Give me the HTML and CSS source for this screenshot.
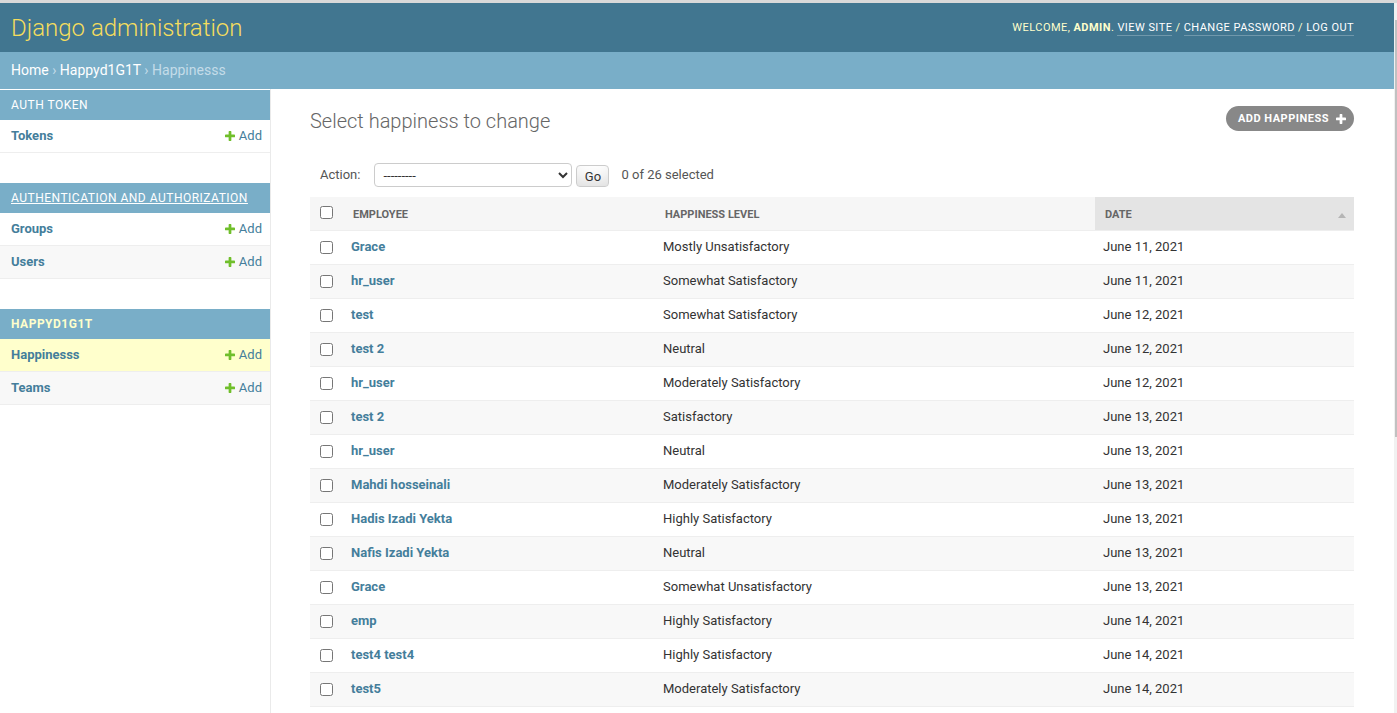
FILE: index.html
```html
<!DOCTYPE html>
<html lang="en">
<head>
<meta charset="utf-8">
<title>Select happiness to change | Django site admin</title>
<link rel="stylesheet" href="styles.css">
</head>
<body>
<div class="window">
  <div class="page">
    <div class="header">
      <h1 class="site-name">Django administration</h1>
      <div class="user-tools">
        Welcome, <strong>admin</strong>. <a href="#">View site</a> / <a href="#">Change password</a> / <a href="#">Log out</a>
      </div>
    </div>
    <div class="breadcrumbs">
      <a href="#">Home</a> › <a href="#">Happyd1G1T</a> › Happinesss
    </div>
    <div class="main">
      <nav class="sidebar">
        <div class="module">
          <div class="module-caption">Auth Token</div>
          <div class="model-row">
            <a class="model-name" href="#">Tokens</a>
            <a class="add-link" href="#"><svg class="plus" viewBox="192 192 1408 1408"><path d="M1600 796v192q0 40-28 68t-68 28h-416v416q0 40-28 68t-68 28h-192q-40 0-68-28t-28-68v-416h-416q-40 0-68-28t-28-68v-192q0-40 28-68t68-28h416v-416q0-40 28-68t68-28h192q40 0 68 28t28 68v416h416q40 0 68 28t28 68z"/></svg>Add</a>
          </div>
        </div>
        <div class="module">
          <div class="module-caption caption-hover">Authentication and Authorization</div>
          <div class="model-row">
            <a class="model-name" href="#">Groups</a>
            <a class="add-link" href="#"><svg class="plus" viewBox="192 192 1408 1408"><path d="M1600 796v192q0 40-28 68t-68 28h-416v416q0 40-28 68t-68 28h-192q-40 0-68-28t-28-68v-416h-416q-40 0-68-28t-28-68v-192q0-40 28-68t68-28h416v-416q0-40 28-68t68-28h192q40 0 68 28t28 68v416h416q40 0 68 28t28 68z"/></svg>Add</a>
          </div>
          <div class="model-row alt">
            <a class="model-name" href="#">Users</a>
            <a class="add-link" href="#"><svg class="plus" viewBox="192 192 1408 1408"><path d="M1600 796v192q0 40-28 68t-68 28h-416v416q0 40-28 68t-68 28h-192q-40 0-68-28t-28-68v-416h-416q-40 0-68-28t-28-68v-192q0-40 28-68t68-28h416v-416q0-40 28-68t68-28h192q40 0 68 28t28 68v416h416q40 0 68 28t28 68z"/></svg>Add</a>
          </div>
        </div>
        <div class="module">
          <div class="module-caption current-app">Happyd1G1T</div>
          <div class="model-row selected">
            <a class="model-name" href="#">Happinesss</a>
            <a class="add-link" href="#"><svg class="plus" viewBox="192 192 1408 1408"><path d="M1600 796v192q0 40-28 68t-68 28h-416v416q0 40-28 68t-68 28h-192q-40 0-68-28t-28-68v-416h-416q-40 0-68-28t-28-68v-192q0-40 28-68t68-28h416v-416q0-40 28-68t68-28h192q40 0 68 28t28 68v416h416q40 0 68 28t28 68z"/></svg>Add</a>
          </div>
          <div class="model-row alt">
            <a class="model-name" href="#">Teams</a>
            <a class="add-link" href="#"><svg class="plus" viewBox="192 192 1408 1408"><path d="M1600 796v192q0 40-28 68t-68 28h-416v416q0 40-28 68t-68 28h-192q-40 0-68-28t-28-68v-416h-416q-40 0-68-28t-28-68v-192q0-40 28-68t68-28h416v-416q0-40 28-68t68-28h192q40 0 68 28t28 68v416h416q40 0 68 28t28 68z"/></svg>Add</a>
          </div>
        </div>
      </nav>
      <div class="content">
        <div class="title-row">
          <h1 class="page-title">Select happiness to change</h1>
          <a class="object-tool" href="#">Add happiness <svg class="plus-white" viewBox="192 192 1408 1408"><path d="M1600 796v192q0 40-28 68t-68 28h-416v416q0 40-28 68t-68 28h-192q-40 0-68-28t-28-68v-416h-416q-40 0-68-28t-28-68v-192q0-40 28-68t68-28h416v-416q0-40 28-68t68-28h192q40 0 68 28t28 68v416h416q40 0 68 28t28 68z"/></svg></a>
        </div>
        <div class="actions">
          <label class="action-label">Action:</label>
          <select class="action-select">
            <option>---------</option>
            <option>Delete selected happinesss</option>
          </select>
          <button class="go-button" type="button">Go</button>
          <span class="action-counter">0 of 26 selected</span>
        </div>
        <table class="results">
          <colgroup>
            <col class="col-check">
            <col class="col-emp">
            <col class="col-level">
            <col class="col-date">
          </colgroup>
          <thead>
            <tr>
              <th class="check-cell"><input type="checkbox" class="cb cb-head"></th>
              <th>Employee</th>
              <th>Happiness level</th>
              <th class="sorted"><div class="sorted-inner"><span>Date</span><svg class="sort-arrow" viewBox="0 0 8 5"><polygon points="0,5 4,0 8,5"/></svg></div></th>
            </tr>
          </thead>
          <tbody>
            <tr><td class="check-cell"><input type="checkbox" class="cb"></td><td><a class="emp" href="#">Grace</a></td><td>Mostly Unsatisfactory</td><td>June 11, 2021</td></tr>
            <tr><td class="check-cell"><input type="checkbox" class="cb"></td><td><a class="emp" href="#">hr_user</a></td><td>Somewhat Satisfactory</td><td>June 11, 2021</td></tr>
            <tr><td class="check-cell"><input type="checkbox" class="cb"></td><td><a class="emp" href="#">test</a></td><td>Somewhat Satisfactory</td><td>June 12, 2021</td></tr>
            <tr><td class="check-cell"><input type="checkbox" class="cb"></td><td><a class="emp" href="#">test 2</a></td><td>Neutral</td><td>June 12, 2021</td></tr>
            <tr><td class="check-cell"><input type="checkbox" class="cb"></td><td><a class="emp" href="#">hr_user</a></td><td>Moderately Satisfactory</td><td>June 12, 2021</td></tr>
            <tr><td class="check-cell"><input type="checkbox" class="cb"></td><td><a class="emp" href="#">test 2</a></td><td>Satisfactory</td><td>June 13, 2021</td></tr>
            <tr><td class="check-cell"><input type="checkbox" class="cb"></td><td><a class="emp" href="#">hr_user</a></td><td>Neutral</td><td>June 13, 2021</td></tr>
            <tr><td class="check-cell"><input type="checkbox" class="cb"></td><td><a class="emp" href="#">Mahdi hosseinali</a></td><td>Moderately Satisfactory</td><td>June 13, 2021</td></tr>
            <tr><td class="check-cell"><input type="checkbox" class="cb"></td><td><a class="emp" href="#">Hadis Izadi Yekta</a></td><td>Highly Satisfactory</td><td>June 13, 2021</td></tr>
            <tr><td class="check-cell"><input type="checkbox" class="cb"></td><td><a class="emp" href="#">Nafis Izadi Yekta</a></td><td>Neutral</td><td>June 13, 2021</td></tr>
            <tr><td class="check-cell"><input type="checkbox" class="cb"></td><td><a class="emp" href="#">Grace</a></td><td>Somewhat Unsatisfactory</td><td>June 13, 2021</td></tr>
            <tr><td class="check-cell"><input type="checkbox" class="cb"></td><td><a class="emp" href="#">emp</a></td><td>Highly Satisfactory</td><td>June 14, 2021</td></tr>
            <tr><td class="check-cell"><input type="checkbox" class="cb"></td><td><a class="emp" href="#">test4 test4</a></td><td>Highly Satisfactory</td><td>June 14, 2021</td></tr>
            <tr><td class="check-cell"><input type="checkbox" class="cb"></td><td><a class="emp" href="#">test5</a></td><td>Moderately Satisfactory</td><td>June 14, 2021</td></tr>
          </tbody>
        </table>
      </div>
    </div>
  </div>
  <div class="scrollbar"><div class="scrollbar-thumb"></div></div>
</div>
</body>
</html>
```
FILE: styles.css
```css
* { box-sizing: border-box; }
html, body { margin: 0; padding: 0; }
body {
  font-family: Roboto, "Liberation Sans", sans-serif;
  color: #333;
  font-size: 14px;
  background: #fff;
}
a { text-decoration: none; }

.window {
  display: flex;
  height: 713px;
  overflow: hidden;
  border-top: 3px solid #d9d9d9;
}
.page {
  flex: 1;
  min-width: 0;
  display: flex;
  flex-direction: column;
}
.scrollbar {
  width: 3px;
  flex: 0 0 3px;
  background: #f1f1f1;
  padding-top: 17px;
}
.scrollbar-thumb {
  width: 2px;
  height: 417px;
  margin-left: 1px;
  background: #c1c1c1;
}

/* header */
.header {
  flex: 0 0 49px;
  background: #417690;
  display: flex;
  align-items: center;
  justify-content: space-between;
  padding: 0 40px 0 11px;
}
.site-name {
  margin: 0;
  font-size: 24px;
  font-weight: 300;
  color: #f5dd5d;
  line-height: 30px;
}
.user-tools {
  font-size: 11px;
  letter-spacing: 0.45px;
  text-transform: uppercase;
  color: #ffc;
  line-height: 14px;
}
.user-tools strong { font-weight: 700; }
.user-tools a {
  color: #fff;
  border-bottom: 1px solid rgba(255, 255, 255, 0.25);
  padding-bottom: 1px;
}

/* breadcrumbs */
.breadcrumbs {
  flex: 0 0 37px;
  background: #79aec8;
  padding: 10px 11px;
  font-size: 14px;
  line-height: 17px;
  color: #c4dce8;
}
.breadcrumbs a { color: #fff; }

/* main */
.main {
  flex: 1;
  display: flex;
  min-height: 0;
}
.sidebar {
  flex: 0 0 271px;
  border-right: 1px solid #eaeaea;
  padding-top: 1px;
}
.module { margin-bottom: 30px; }
.module-caption {
  background: #79aec8;
  color: #fff;
  font-size: 12px;
  letter-spacing: 0.5px;
  text-transform: uppercase;
  padding: 8px 11px;
  line-height: 14px;
}
.caption-hover { text-decoration: underline; }
.current-app { color: #ffc; font-weight: 700; }
.model-row {
  display: flex;
  justify-content: space-between;
  align-items: center;
  padding: 8px 8px 8px 11px;
  line-height: 16px;
  font-size: 13px;
  border-bottom: 1px solid #eee;
}
.model-row.alt { background: #f8f8f8; }
.model-row.selected { background: #ffc; }
.model-name { color: #447e9b; font-weight: 700; }
.add-link {
  color: #447e9b;
  display: flex;
  align-items: center;
}
.plus {
  width: 10px;
  height: 10px;
  fill: #70bf2b;
  margin-right: 4px;
}

/* content */
.content {
  flex: 1;
  min-width: 0;
  padding: 17px 40px 0 39px;
}
.title-row {
  display: flex;
  justify-content: space-between;
  align-items: flex-start;
}
.page-title {
  margin: 0;
  font-size: 20px;
  font-weight: 300;
  color: #666;
  line-height: 30px;
}
.object-tool {
  height: 25px;
  border-radius: 15px;
  background: #888;
  color: #fff;
  font-size: 11px;
  font-weight: 700;
  letter-spacing: 0.5px;
  text-transform: uppercase;
  display: flex;
  align-items: center;
  padding: 0 8px 0 12px;
}
.plus-white {
  width: 10px;
  height: 10px;
  fill: #fff;
  margin-left: 7px;
}

.actions {
  margin-top: 17px;
  height: 44px;
  padding: 10px;
  display: flex;
  align-items: center;
  font-size: 13px;
  color: #555;
}
.action-label { margin-right: 14px; padding-bottom: 2px; }
.action-counter { padding-bottom: 2px; }
.action-select {
  width: 198px;
  height: 24px;
  border: 1px solid #ccc;
  border-radius: 4px;
  background: #fff;
  font-family: Roboto, "Liberation Sans", sans-serif;
  font-size: 13px;
  color: #333;
  padding: 0 4px;
  margin: 0 4px 0 0;
}
.go-button {
  height: 22px;
  width: 33px;
  border: 1px solid #ccc;
  border-radius: 4px;
  background: #fff;
  box-shadow: 0 -15px 20px -10px rgba(0, 0, 0, 0.15) inset;
  font-family: Roboto, "Liberation Sans", sans-serif;
  font-size: 13px;
  color: #333;
  padding: 0;
  margin: 2px 12px 0 0;
}

/* table */
.results {
  width: 100%;
  border-collapse: separate;
  border-spacing: 0;
  table-layout: fixed;
}
.col-check { width: 33px; }
.col-emp { width: 312px; }
.col-level { width: 440px; }
.results thead th {
  background: #f6f6f6;
  color: #666;
  font-size: 11px;
  font-weight: 700;
  text-transform: uppercase;
  text-align: left;
  padding: 9px 10px 7px;
  line-height: 17px;
  border-bottom: 1px solid #eee;
}
.results thead th.sorted {
  background: #e4e4e4;
  padding-right: 8px;
}
.sorted-inner {
  display: flex;
  justify-content: space-between;
  align-items: center;
}
.sort-arrow {
  width: 8px;
  height: 5px;
  fill: #b5b5b5;
  margin-top: 2px;
}
.results td {
  padding: 7px 8px 9px;
  font-size: 13px;
  line-height: 17px;
  border-bottom: 1px solid #eee;
  color: #333;
}
.results tbody tr:nth-child(even) td { background: #f8f8f8; }
.results th.check-cell { padding: 8px 10px; }
.results td.check-cell { padding: 7px 10px 9px; }
.cb {
  display: block;
  width: 13px;
  height: 13px;
  margin: 2px 0 0 0;
}
.cb-head { margin-top: -2px; }
.emp { color: #447e9b; font-weight: 700; }
```
